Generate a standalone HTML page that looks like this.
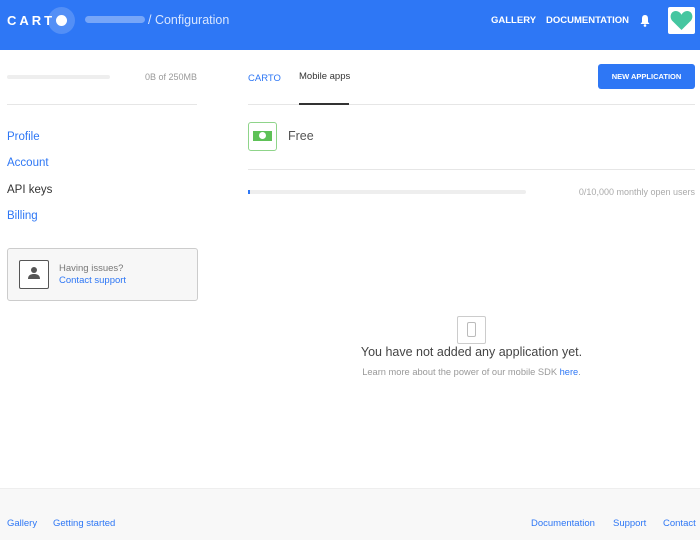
<!DOCTYPE html>
<html><head><style>
*{margin:0;padding:0;box-sizing:border-box}
body{width:700px;height:540px;overflow:hidden;font-family:"Liberation Sans",sans-serif;background:#fff;position:relative;color:#333}
.a{position:absolute}
.hdr{left:0;top:0;width:700px;height:50px;background:#2e77f5}
.blue{color:#2e77f5}
</style></head><body>
<div class="a hdr">
  <div class="a" style="left:7px;top:13px;color:#fff;font-weight:bold;font-size:13px;letter-spacing:3px">CART</div>
  <div class="a" style="left:48px;top:7px;width:27px;height:27px;border-radius:50%;background:rgba(255,255,255,0.18)"></div>
  <div class="a" style="left:56px;top:15px;width:11px;height:11px;border-radius:50%;background:#fff"></div>
  <div class="a" style="left:85px;top:16px;width:60px;height:7px;border-radius:4px;background:rgba(255,255,255,0.35)"></div>
  <div class="a" style="left:148px;top:13px;color:#d8e6ff;font-size:12.5px">/ Configuration</div>
  <div class="a" style="left:491px;top:15px;color:#fff;font-size:9.5px;font-weight:bold">GALLERY</div>
  <div class="a" style="left:546px;top:15px;color:#fff;font-size:9.5px;font-weight:bold">DOCUMENTATION</div>
  <svg class="a" style="left:639px;top:14px" width="12" height="13" viewBox="0 0 12 13"><path d="M6 1C3.5 1 3 3 3 5v3L1.5 10h9L9 8V5c0-2-.5-4-3-4z" fill="#fff"/><circle cx="6" cy="11.5" r="1.3" fill="#fff"/></svg>
  <div class="a" style="left:668px;top:7px;width:27px;height:27px;background:#fff;border-radius:2px"></div>
  <svg class="a" style="left:670px;top:10px" width="23" height="21" viewBox="0 0 24 22"><path d="M12 21L2 11C-1 7 1 1 6 1c3 0 5 2 6 4 1-2 3-4 6-4 5 0 7 6 4 10z" fill="#45c6a0"/></svg>
</div>
<div class="a" style="left:7px;top:75px;width:103px;height:4px;background:#eee;border-radius:2px"></div>
<div class="a" style="left:145px;top:72px;font-size:9px;color:#999">0B of 250MB</div>
<div class="a" style="left:7px;top:104px;width:190px;height:1px;background:#e6e6e6"></div>
<div class="a blue" style="left:7px;top:131px;font-size:11.5px">Profile</div>
<div class="a blue" style="left:7px;top:157px;font-size:11.5px">Account</div>
<div class="a" style="left:7px;top:184px;font-size:11.5px;color:#333">API keys</div>
<div class="a blue" style="left:7px;top:210px;font-size:11.5px">Billing</div>
<div class="a" style="left:7px;top:248px;width:191px;height:53px;background:#f7f7f7;border:1px solid #ccc;border-radius:3px"></div>
<div class="a" style="left:19px;top:260px;width:30px;height:29px;border:1px solid #555;background:#fff;border-radius:2px"></div>
<svg class="a" style="left:26px;top:265px" width="16" height="16" viewBox="0 0 16 16"><circle cx="8" cy="5" r="3" fill="#555"/><path d="M2 14c0-4 3-5 6-5s6 1 6 5z" fill="#555"/></svg>
<div class="a" style="left:59px;top:263px;font-size:9.5px;color:#777">Having issues?</div>
<div class="a blue" style="left:59px;top:275px;font-size:9.5px">Contact support</div>

<div class="a blue" style="left:248px;top:73px;font-size:9.5px">CARTO</div>
<div class="a" style="left:299px;top:71px;font-size:9.5px;color:#333">Mobile apps</div>
<div class="a" style="left:248px;top:104px;width:447px;height:1px;background:#e6e6e6"></div>
<div class="a" style="left:299px;top:103px;width:50px;height:2px;background:#333"></div>
<div class="a" style="left:598px;top:64px;width:97px;height:25px;background:#2e77f5;border-radius:3px;color:#fff;font-size:7.5px;font-weight:bold;text-align:center;line-height:25px">NEW APPLICATION</div>

<div class="a" style="left:248px;top:122px;width:29px;height:29px;border:1px solid #8fd48a;border-radius:3px"></div>
<div class="a" style="left:253px;top:131px;width:19px;height:10px;background:#5ec157"></div>
<div class="a" style="left:259px;top:132px;width:7px;height:7px;border-radius:50%;background:#fff"></div>
<div class="a" style="left:288px;top:129px;font-size:12.5px;color:#555">Free</div>
<div class="a" style="left:248px;top:169px;width:447px;height:1px;background:#e6e6e6"></div>
<div class="a" style="left:248px;top:190px;width:278px;height:4px;background:#eee;border-radius:2px"></div>
<div class="a" style="left:248px;top:190px;width:2px;height:4px;background:#2e77f5"></div>
<div class="a" style="right:5px;top:187px;font-size:9px;color:#aaa">0/10,000 monthly open users</div>

<div class="a" style="left:457px;top:316px;width:29px;height:28px;border:1px solid #ccc;border-radius:2px"></div>
<div class="a" style="left:467px;top:322px;width:9px;height:15px;border:1px solid #bbb;border-radius:2px"></div>
<div class="a" style="left:248px;width:447px;top:345px;text-align:center;font-size:12.5px;color:#444">You have not added any application yet.</div>
<div class="a" style="left:248px;width:447px;top:367px;text-align:center;font-size:9.3px;color:#999">Learn more about the power of our mobile SDK <span class="blue">here</span>.</div>

<div class="a" style="left:0;top:488px;width:700px;height:52px;background:#f8f8f8;border-top:1px solid #eee"></div>
<div class="a blue" style="left:7px;top:518px;font-size:9.5px">Gallery</div>
<div class="a blue" style="left:53px;top:518px;font-size:9.5px">Getting started</div>
<div class="a blue" style="left:531px;top:518px;font-size:9.5px">Documentation</div>
<div class="a blue" style="left:613px;top:518px;font-size:9.5px">Support</div>
<div class="a blue" style="left:663px;top:518px;font-size:9.5px">Contact</div>
</body></html>
